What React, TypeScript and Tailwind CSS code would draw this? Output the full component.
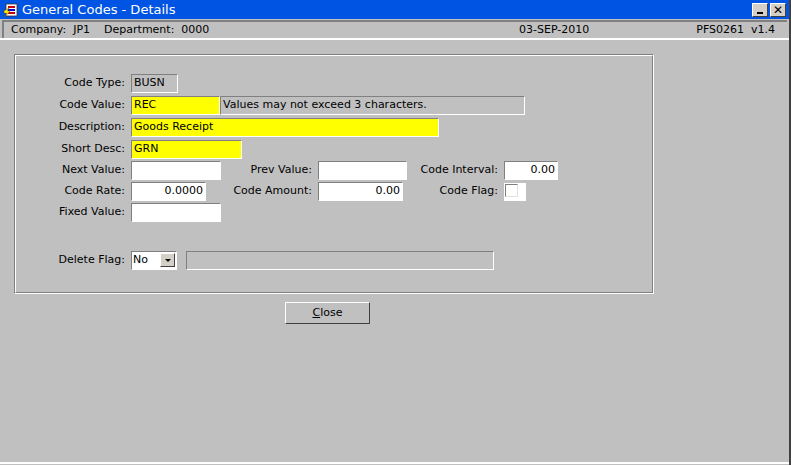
import React from "react";

const sunk = "border-t border-l border-t-[#808080] border-l-[#808080] border-b border-r border-b-white border-r-white h-[19px] flex items-center px-[2px] overflow-hidden whitespace-nowrap";

function Label({ w, children }: { w: number; children: React.ReactNode }) {
  return <div className="text-right pr-[6px] shrink-0" style={{ width: w }}>{children}</div>;
}

export default function App() {
  return (
    <div className="w-[791px] h-[465px] bg-[#c0c0c0] text-[11px] text-black relative overflow-hidden border-r-2 border-r-[#404040]" style={{ fontFamily: "Tahoma, 'DejaVu Sans', 'Liberation Sans', sans-serif" }}>
      <div className="h-[19px] bg-[#0054e3] flex items-center pl-[3px] pr-[3px]">
        <svg width="16" height="16" viewBox="0 0 16 16">
          <rect x="3" y="2" width="11" height="12" fill="#fff" stroke="#333" strokeWidth="0.8"/>
          <rect x="5" y="4" width="7" height="2" fill="#c00"/>
          <rect x="5" y="7" width="7" height="2" fill="#00c"/>
          <rect x="5" y="10" width="7" height="2" fill="#c00"/>
          <path d="M1 9 L6 6 L4 9 L7 9 L2 15 L4 11 L1 11Z" fill="#ff0" stroke="#840" strokeWidth="0.5"/>
        </svg>
        <span className="text-white text-[13px] ml-[3px]">General Codes - Details</span>
        <div className="ml-auto flex gap-[2px]">
          <div className="w-[16px] h-[14px] bg-[#d4d0c8] border border-t-white border-l-white border-b-[#404040] border-r-[#404040] flex items-end justify-center pb-[2px]"><div className="w-[6px] h-[2px] bg-black"/></div>
          <div className="w-[16px] h-[14px] bg-[#d4d0c8] border border-t-white border-l-white border-b-[#404040] border-r-[#404040] flex items-center justify-center text-[12px] font-bold leading-none">✕</div>
        </div>
      </div>
      <div className="mx-[2px] h-[18px] border-t-2 border-l-2 border-[#808080] border-r-0 border-b-0 flex items-center pl-[7px] pr-[12px] mt-[1px]">
        <span>Company:&nbsp; JP1 &nbsp;&nbsp; Department:&nbsp; 0000</span>
        <span className="ml-auto mr-[107px]">03-SEP-2010</span>
        <span>PFS0261&nbsp; v1.4</span>
      </div>
      <div className="h-[2px] bg-white" />
      <div className="ml-[14px] mt-[14px] w-[640px] h-[240px] border border-t-[#808080] border-l-[#808080] border-b-white border-r-white">
        <div className="w-full h-full border border-t-white border-l-white border-b-[#808080] border-r-[#808080] pt-[16px]">
          <div className="flex items-center h-[22px]"><Label w={115}>Code Type:</Label><div className={sunk + " w-[47px]"}>BUSN</div></div>
          <div className="flex items-center h-[22px]"><Label w={115}>Code Value:</Label><div className={sunk + " w-[89px] bg-[#ffff00]"}>REC</div><div className={sunk + " w-[305px]"}>Values may not exceed 3 characters.</div></div>
          <div className="flex items-center h-[22px]"><Label w={115}>Description:</Label><div className={sunk + " w-[308px] bg-[#ffff00]"}>Goods Receipt</div></div>
          <div className="flex items-center h-[22px]"><Label w={115}>Short Desc:</Label><div className={sunk + " w-[111px] bg-[#ffff00]"}>GRN</div></div>
          <div className="flex items-center h-[21px]">
            <Label w={115}>Next Value:</Label><div className={sunk + " w-[90px] bg-white"}></div>
            <Label w={97}>Prev Value:</Label><div className={sunk + " w-[89px] bg-white"}></div>
            <Label w={97}>Code Interval:</Label><div className={sunk + " w-[54px] bg-white justify-end"}>0.00</div>
          </div>
          <div className="flex items-center h-[21px]">
            <Label w={115}>Code Rate:</Label><div className={sunk + " w-[75px] bg-white justify-end"}>0.0000</div>
            <Label w={112}>Code Amount:</Label><div className={sunk + " w-[85px] bg-white justify-end"}>0.00</div>
            <Label w={101}>Code Flag:</Label><div className="w-[22px] h-[18px] bg-white pl-[1px] pt-[1px]"><div className="w-[13px] h-[13px] border border-t-[#808080] border-l-[#808080] border-b-[#e0e0e0] border-r-[#e0e0e0]"/></div>
          </div>
          <div className="flex items-center h-[21px]"><Label w={115}>Fixed Value:</Label><div className={sunk + " w-[90px] bg-white"}></div></div>
          <div className="flex items-center h-[22px] mt-[26px]">
            <Label w={115}>Delete Flag:</Label>
            <div className="w-[46px] h-[19px] bg-white border border-t-[#808080] border-l-[#808080] border-b-white border-r-white flex items-center pl-[1px]">
              <span>No</span>
              <div className="ml-auto w-[15px] h-[14px] mr-[1px] bg-[#d4d0c8] border border-t-white border-l-white border-b-[#404040] border-r-[#404040] flex items-center justify-center"><div className="w-0 h-0 border-l-[3px] border-r-[3px] border-t-[3px] border-l-transparent border-r-transparent border-t-black"/></div>
            </div>
            <div className={sunk + " w-[308px] ml-[9px]"}></div>
          </div>
        </div>
      </div>
      <div className="ml-[285px] mt-[8px] w-[85px] h-[22px] border border-t-white border-l-white border-b-[#404040] border-r-[#404040] flex items-center justify-center">
        <span><span className="underline">C</span>lose</span>
      </div>
      <div className="absolute left-0 right-0 bottom-[1px] h-[2px] bg-white" />
    </div>
  );
}
